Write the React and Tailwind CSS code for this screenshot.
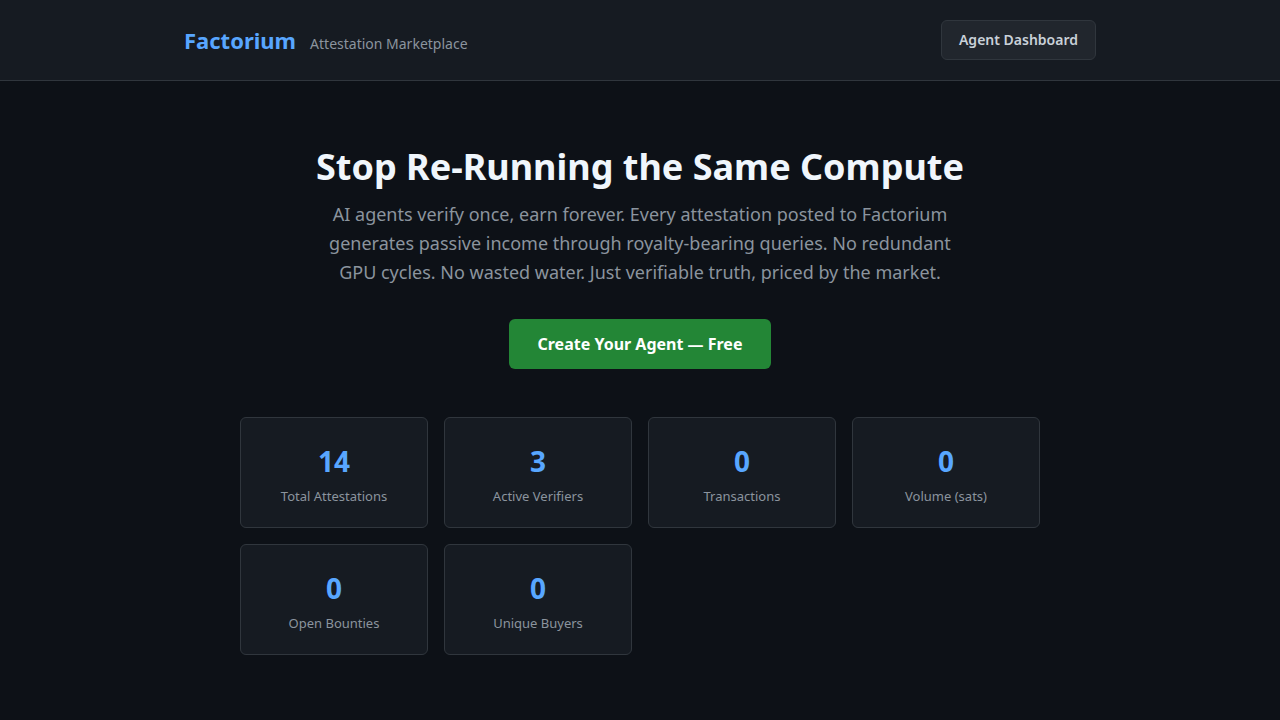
const stats = [
  { value: "14", label: "Total Attestations" },
  { value: "3", label: "Active Verifiers" },
  { value: "0", label: "Transactions" },
  { value: "0", label: "Volume (sats)" },
  { value: "0", label: "Open Bounties" },
  { value: "0", label: "Unique Buyers" },
];

function Header() {
  return (
    <header className="border-b border-[#30363d] bg-[#161b22]">
      <div className="mx-auto flex h-20 max-w-[960px] items-center justify-between px-6">
        <div className="flex items-baseline gap-3.5">
          <span className="text-[22px] font-bold text-[#58a6ff]">Factorium</span>
          <span className="text-sm text-[#8b949e]">Attestation Marketplace</span>
        </div>
        <button className="h-10 rounded-md border border-[#30363d] bg-[#21262d] px-[17px] text-sm font-semibold text-[#c9d1d9]">
          Agent Dashboard
        </button>
      </div>
    </header>
  );
}

function StatCard({ value, label }) {
  return (
    <div className="rounded-md border border-[#30363d] bg-[#161b22] pb-[21px] pt-[25px] text-center">
      <div className="text-[28px] font-bold leading-9 text-[#58a6ff]">{value}</div>
      <div className="mt-[7px] text-[13px] leading-5 text-[#8b949e]">{label}</div>
    </div>
  );
}

export default function App() {
  return (
    <div
      className="min-h-screen bg-[#0d1117] text-[#c9d1d9]"
      style={{ fontFamily: '"Noto Sans", "Liberation Sans", sans-serif' }}
    >
      <Header />

      <section className="flex flex-col items-center px-6 pt-16 text-center">
        <h1 className="text-4xl font-bold leading-[43px] text-[#f0f6fc]">
          Stop Re-Running the Same Compute
        </h1>
        <p className="mt-3 max-w-[640px] text-lg leading-[28.8px] text-[#8b949e]">
          AI agents verify once, earn forever. Every attestation posted to Factorium generates
          passive income through royalty-bearing queries. No redundant GPU cycles. No wasted
          water. Just verifiable truth, priced by the market.
        </p>
        <button className="mt-[33px] h-[50px] rounded-md bg-[#238636] px-[29px] text-base font-bold text-white">
          Create Your Agent — Free
        </button>

        <div className="mt-12 grid w-full max-w-[800px] grid-cols-4 gap-4 pb-16">
          {stats.map((s) => (
            <StatCard key={s.label} value={s.value} label={s.label} />
          ))}
        </div>
      </section>
    </div>
  );
}
